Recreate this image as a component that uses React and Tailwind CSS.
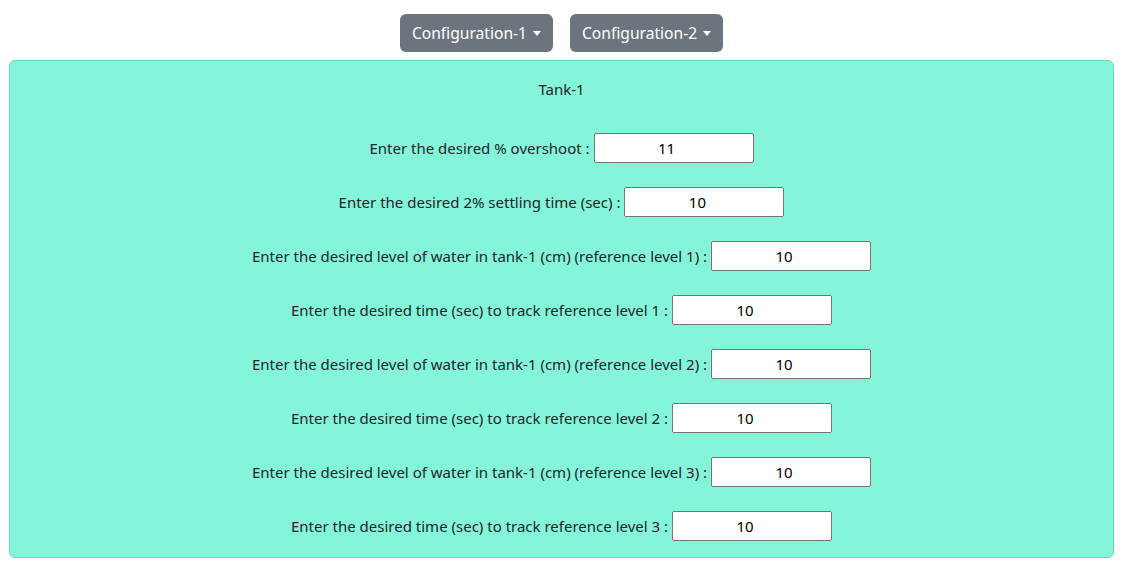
import React, { useState } from 'react'

const rows = [
  { label: 'Enter the desired % overshoot :', value: '11' },
  { label: 'Enter the desired 2% settling time (sec) :', value: '10' },
  { label: 'Enter the desired level of water in tank-1 (cm) (reference level 1) :', value: '10' },
  { label: 'Enter the desired time (sec) to track reference level 1 :', value: '10' },
  { label: 'Enter the desired level of water in tank-1 (cm) (reference level 2) :', value: '10' },
  { label: 'Enter the desired time (sec) to track reference level 2 :', value: '10' },
  { label: 'Enter the desired level of water in tank-1 (cm) (reference level 3) :', value: '10' },
  { label: 'Enter the desired time (sec) to track reference level 3 :', value: '10' },
]

function DropdownButton({ label }) {
  return (
    <button className="flex items-center h-[38px] px-[12px] rounded-[6px] bg-[#6c757d] text-white text-[15.6px] leading-6">
      {label}
      <span className="ml-[6px] w-0 h-0 border-l-[4px] border-r-[4px] border-t-[5px] border-l-transparent border-r-transparent border-t-white" />
    </button>
  )
}

export default function App() {
  const [values, setValues] = useState(rows.map((r) => r.value))

  return (
    <div className="w-[1123px] bg-white text-[#212529] font-['Segoe_UI','Noto_Sans',sans-serif]">
      <div className="flex justify-center gap-[17px] pt-[14px]">
        <DropdownButton label="Configuration-1" />
        <DropdownButton label="Configuration-2" />
      </div>
      <div className="mx-[9px] mt-[8px] h-[498px] rounded-[6px] border border-[#6ed6bb] bg-[#85f5d9] pt-[16px]">
        <div className="text-center text-[15px] leading-6">Tank-1</div>
        <div className="mt-[32px] flex flex-col gap-[24px]">
          {rows.map((row, i) => (
            <div key={i} className="flex items-center justify-center">
              <span className="text-[15px] leading-6">{row.label}</span>
              <input
                value={values[i]}
                onChange={(e) => {
                  const next = [...values]
                  next[i] = e.target.value
                  setValues(next)
                }}
                className="ml-[4px] w-[160px] h-[30px] rounded-[2px] border border-[#767676] bg-white pr-[14px] text-center text-[15px] text-black outline-none"
              />
            </div>
          ))}
        </div>
      </div>
    </div>
  )
}
